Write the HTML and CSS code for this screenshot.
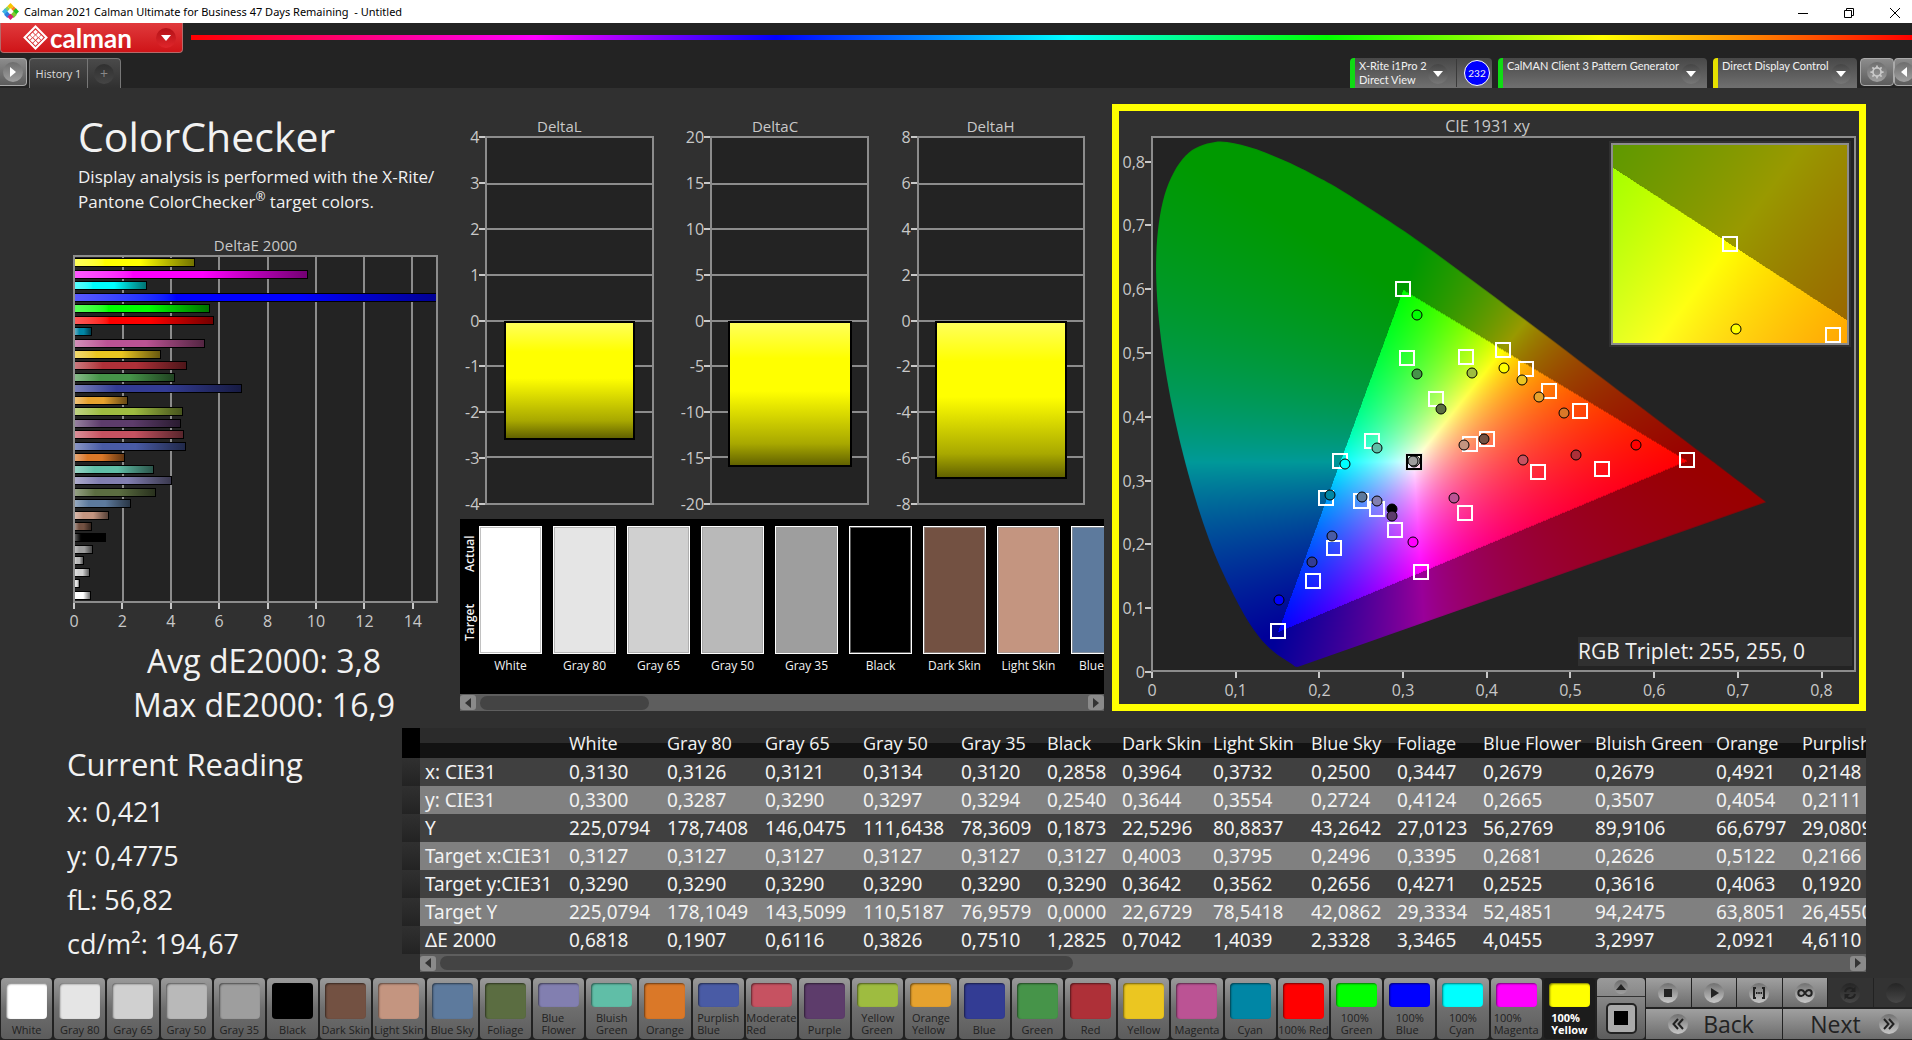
FILE: index.html
```html
<!DOCTYPE html>
<html lang="en">
<head>
  <meta charset="UTF-8">
  <title>Calman 2021</title>
  <link rel="stylesheet" href="styles.css">
</head>
<body>
  <div class="titlebar">
    <svg class="app-icon" viewBox="0 0 16 16">
      <path d="M8 0l3 3-3 3-3-3z" fill="#f7c600"/>
      <path d="M5 3l3 3-3 3-3-3z" fill="#8fd14f"/>
      <path d="M11 3l3 3-3 3-3-3z" fill="#f58220"/>
      <path d="M3 5l3 3-3 3-3-3z" fill="#3cb4e5"/>
      <path d="M13 5l3 3-3 3-3-3z" fill="#1fc21f"/>
      <path d="M8 5l3 3-3 3-3-3z" fill="#fff"/>
      <path d="M5 8l3 3-3 3-3-3z" fill="#2f7de1"/>
      <path d="M11 8l3 3-3 3-3-3z" fill="#7fc832"/>
      <path d="M8 10l3 3-3 3-3-3z" fill="#d6246e"/>
    </svg>
    <span class="window-title">Calman 2021 Calman Ultimate for Business 47 Days Remaining &nbsp;- Untitled</span>
    <button class="win-btn" aria-label="Minimize"><svg viewBox="0 0 12 12"><path d="M1 6.500h10"/></svg></button>
    <button class="win-btn" aria-label="Restore"><svg viewBox="0 0 12 12"><path d="M1.500 3.500h7v7h-7zM3.500 3.500v-2h7v7h-2"/></svg></button>
    <button class="win-btn" aria-label="Close"><svg viewBox="0 0 12 12"><path d="M1 1l10 10M11 1L1 11"/></svg></button>
  </div>

  <header class="header">
    <div class="brand-row">
      <button class="brand">
        <svg class="brand-mark" viewBox="0 0 24 24">
          <path d="M12 1.500L22.500 12 12 22.500 1.500 12z" fill="none" stroke="#fff" stroke-width="2"/>
          <g fill="#fff">
            <path d="M12 4.500l2.300 2.300L12 9.100 9.700 6.800z"/>
            <path d="M9.200 7.300l2.300 2.300-2.300 2.300-2.300-2.300z"/>
            <path d="M14.800 7.300l2.300 2.300-2.300 2.300-2.300-2.300z"/>
            <path d="M6.500 9.900l2.200 2.200-2.200 2.200-2.200-2.200z"/>
            <path d="M12 9.900l2.200 2.200-2.200 2.200-2.200-2.200z"/>
            <path d="M17.500 9.900l2.200 2.200-2.200 2.200-2.200-2.200z"/>
            <path d="M9.200 12.500l2.300 2.300-2.300 2.300-2.300-2.300z"/>
            <path d="M14.800 12.500l2.300 2.300-2.300 2.300-2.300-2.300z"/>
            <path d="M12 15.200l2.300 2.300-2.300 2.300-2.300-2.300z"/>
          </g>
        </svg>
        <span class="brand-name">calman</span>
        <span class="knob knob-red"><i class="tri-down"></i></span>
      </button>
      <div class="rainbow"></div>
    </div>
    <div class="tab-row">
      <button class="side-btn" aria-label="Expand"><span class="knob"><i class="tri-right"></i></span></button>
      <div class="tabs">
        <button class="tab">History 1</button>
        <button class="tab tab-add" aria-label="Add"><span class="knob knob-dark">+</span></button>
      </div>
      <div class="devices">
        <div class="device device-meter">
          <button class="device-main"><span>X-Rite i1Pro 2<br>Direct View</span><span class="knob knob-gray"><i class="tri-down"></i></span></button>
          <span class="counter">232</span>
        </div>
        <button class="device device-source"><span>CalMAN Client 3 Pattern Generator</span><span class="knob knob-gray"><i class="tri-down"></i></span></button>
        <button class="device device-display"><span>Direct Display Control</span><span class="knob knob-gray"><i class="tri-down"></i></span></button>
        <button class="side-btn gear" aria-label="Settings">
          <span class="knob"><svg viewBox="0 0 16 16" class="gear-icon"><circle cx="8" cy="8" r="4.600"/><path d="M8 .5v3M8 12.500v3M.5 8h3M12.500 8h3M2.700 2.700l2.100 2.100M11.200 11.200l2.100 2.100M13.300 2.700l-2.100 2.100M4.800 11.200l-2.100 2.100"/></svg></span>
        </button>
        <button class="side-btn collapse" aria-label="Collapse"><span class="knob"><i class="tri-left"></i></span></button>
      </div>
    </div>
  </header>

  <main class="main">
    <section class="top">
      <div class="overview">
        <h1>ColorChecker</h1>
        <p class="intro">Display analysis is performed with the X-Rite/<br>Pantone ColorChecker<sup>®</sup> target colors.</p>
        <div class="de-chart">
          <div class="chart-title">DeltaE 2000</div>
          <div class="plot de-plot" id="dePlot"></div>
          <div class="x-axis" id="deAxis"></div>
        </div>
        <div class="summary">
          <div>Avg dE2000: 3,8</div>
          <div>Max dE2000: 16,9</div>
        </div>
      </div>

      <div class="middle">
        <div class="delta-charts" id="deltaCharts"></div>
        <div class="strip">
          <div class="strip-body">
            <div class="strip-side"><span>Actual</span><span>Target</span></div>
            <div class="strip-list" id="strip"></div>
          </div>
          <div class="scrollbar">
            <button aria-label="Scroll left"><i class="tri-left"></i></button>
            <div class="track"><div class="thumb thumb-strip"></div></div>
            <button aria-label="Scroll right"><i class="tri-right"></i></button>
          </div>
        </div>
      </div>

      <div class="cie">
        <div class="chart-title cie-title">CIE 1931 xy</div>
        <div class="cie-body">
          <div class="y-ticks" id="cieY"></div>
          <div class="plot cie-plot" id="ciePlot">
            <canvas id="gamut" width="701" height="531"></canvas>
            <div class="inset" id="inset"><canvas id="insetGamut" width="236" height="198"></canvas></div>
            <div class="triplet">RGB Triplet: 255, 255, 0</div>
          </div>
        </div>
        <div class="x-axis cie-x" id="cieX"></div>
      </div>
    </section>

    <section class="bottom">
      <div class="reading">
        <h2>Current Reading</h2>
        <div>x: 0,421</div>
        <div>y: 0,4775</div>
        <div>fL: 56,82</div>
        <div>cd/m²: 194,67</div>
      </div>
      <div class="data">
        <div class="table-wrap">
          <table>
            <colgroup id="cols"></colgroup>
            <thead id="thead"></thead>
            <tbody id="tbody"></tbody>
          </table>
        </div>
        <div class="scrollbar scrollbar-data">
          <button aria-label="Scroll left"><i class="tri-left"></i></button>
          <div class="track"><div class="thumb thumb-data"></div></div>
          <button aria-label="Scroll right"><i class="tri-right"></i></button>
        </div>
      </div>
    </section>
  </main>

  <footer class="footer">
    <div class="patches" id="patches"></div>
    <div class="stepper">
      <button class="step-up" aria-label="Up"><span class="knob"><i class="tri-up"></i></span></button>
      <button class="step-stop" aria-label="Pattern window"><span></span></button>
    </div>
    <div class="controls">
      <div class="transport">
        <button aria-label="Stop"><span class="knob knob-light"><svg viewBox="0 0 16 16"><path d="M4 4h8v8H4z"/></svg></span></button>
        <button aria-label="Play"><span class="knob knob-light"><svg viewBox="0 0 16 16"><path d="M5 3l8 5-8 5z"/></svg></span></button>
        <button aria-label="Read series"><span class="knob knob-light"><svg viewBox="0 0 16 16"><path class="line thick" d="M5 3H3v10h2M11 3h2v10h-2"/><path d="M5 7h1.500v2H5zM7.200 7h1.600v2H7.200zM9.500 7H11v2H9.500z"/></svg></span></button>
        <button aria-label="Continuous"><span class="knob knob-light"><svg viewBox="0 0 16 16"><path class="line thick" d="M8 8C6.500 5.500 5.500 5 4.300 5a3 3 0 000 6C5.500 11 6.500 10.500 8 8s2.500-3 3.700-3a3 3 0 010 6C10.500 11 9.500 10.500 8 8z"/></svg></span></button>
        <button class="off" aria-label="Refresh"><span class="knob knob-off"><svg viewBox="0 0 16 16"><path class="line thick" d="M3 7a5 5 0 018.500-2.500M13 9a5 5 0 01-8.500 2.500"/><path d="M13.500 1.500V7H8zM2.500 14.500V9H8z"/></svg></span></button>
        <button class="off" aria-label="Record"><span class="knob knob-off"></span></button>
      </div>
      <div class="nav">
        <button class="back"><span class="knob knob-light"><svg viewBox="0 0 16 16"><path class="line thick" d="M8 3L3.500 8 8 13M13 3L8.500 8l4.500 5"/></svg></span>Back</button>
        <button class="next">Next<span class="knob knob-light"><svg viewBox="0 0 16 16"><path class="line thick" d="M3 3l4.500 5L3 13M8 3l4.500 5L8 13"/></svg></span></button>
      </div>
    </div>
  </footer>

  <script src="script.js"></script>
</body>
</html>
```

FILE: styles.css
```css
* {
  box-sizing: border-box;
}
body {
  margin: 0;
  min-height: 100vh;
  display: flex;
  flex-direction: column;
  overflow-x: hidden;
  background: #303030;
  color: #f2f2f2;
  font-family: "Open Sans", "Noto Sans", sans-serif;
}
button {
  margin: 0;
  padding: 0;
  border: none;
  font-family: inherit;
  color: inherit;
  cursor: pointer;
}
h1, h2, p {
  margin: 0;
  font-weight: normal;
}

/* window title */
.titlebar {
  display: flex;
  align-items: center;
  height: 23px;
  padding-right: 0;
  margin-right: -6px;
  background: #fff;
  color: #000;
}
.app-icon {
  width: 17px;
  height: 17px;
  margin: 0 5px 0 2px;
}
.window-title {
  flex: 1;
  font-family: "Noto Sans", sans-serif;
  font-size: 11px;
}
.win-btn {
  width: 46px;
  height: 23px;
  background: none;
}
.win-btn svg {
  width: 12px;
  height: 12px;
  fill: none;
  stroke: #000;
  vertical-align: middle;
}

/* small round knobs and triangles */
.knob {
  display: flex;
  flex: none;
  align-items: center;
  justify-content: center;
  width: 20px;
  height: 20px;
  border-radius: 50%;
  background: linear-gradient(#6d6d6d, #a0a0a0);
}
.knob-red { background: linear-gradient(#b31217, #e0252a); }
.knob-dark { background: linear-gradient(#303030, #454545); }
.knob-gray { background: linear-gradient(#454545, #777); }
.knob-light { background: linear-gradient(#707070, #c8c8c8); }
.knob-off { background: linear-gradient(#252525, #474747); }
.tri-down, .tri-up, .tri-left, .tri-right {
  width: 0;
  height: 0;
  border: 5px solid transparent;
}
.tri-down { border-top: 6px solid #fff; border-bottom: 0; }
.tri-up { border-bottom: 6px solid #222; border-top: 0; }
.tri-right { border-left: 6px solid #fff; border-right: 0; }
.tri-left { border-right: 6px solid #fff; border-left: 0; }

/* header */
.header {
  height: 65px;
  background: #232323;
}
.brand-row {
  display: flex;
  gap: 8px;
  height: 35px;
}
.brand {
  display: flex;
  align-items: center;
  width: 183px;
  height: 30px;
  padding: 0 6px 0 22px;
  background: linear-gradient(#e03a3c, #cf1418);
  border: 1px solid #b56a6a;
  border-top: none;
  border-radius: 0 0 4px 4px;
}
.brand-mark {
  width: 25px;
  height: 25px;
}
.brand-name {
  flex: 1;
  padding-left: 2px;
  text-align: left;
  font-family: Lato, sans-serif;
  font-size: 26px;
  font-weight: bold;
  line-height: 24px;
  color: #fff;
}
.rainbow {
  flex: 1;
  height: 5px;
  margin-top: 12px;
  background: linear-gradient(90deg, #f00 0%, #f0f 20%, #00f 34%, #0ff 51%, #0f0 66%, #ff0 82%, #f00 100%);
}
.tab-row {
  display: flex;
  height: 30px;
}
.side-btn {
  display: flex;
  flex: none;
  align-items: center;
  justify-content: center;
  width: 27px;
  height: 28px;
  background: linear-gradient(#8c8c8c, #5c5c5c);
  border: 1px solid #aaa;
  border-left: none;
  border-radius: 0 4px 4px 0;
}
.tabs {
  display: flex;
  margin-left: 2px;
  border: 1px solid #777;
  border-bottom: none;
  border-radius: 4px 4px 0 0;
  background: linear-gradient(#4a4a4a, #303030);
}
.tab {
  width: 57px;
  background: none;
  font-size: 11px;
  color: #ddd;
}
.tab-add {
  display: flex;
  align-items: center;
  justify-content: center;
  width: 33px;
  border-left: 1px solid #777;
}
.tab-add .knob {
  color: #888;
  font-size: 14px;
}
.devices {
  display: flex;
  gap: 6px;
  margin-left: auto;
}
.device {
  display: flex;
  height: 30px;
  padding: 1px 6px 0 4px;
  border-left: 5px solid #0fdc14;
  border-radius: 4px 4px 0 0;
  background: linear-gradient(#484848, #707070);
  font-family: Lato, sans-serif;
  font-size: 11px;
  line-height: 14px;
  text-align: left;
  white-space: nowrap;
  color: #f2f2f2;
}
.device .knob {
  margin: 5px 0 0 auto;
}
.device-meter {
  width: 142px;
  padding: 0 2px 0 4px;
  align-items: center;
}
.device-main {
  display: flex;
  flex: 1;
  height: 28px;
  padding-right: 8px;
  border-right: 1px solid #3a3a3a;
  background: none;
  font-size: 11px;
  line-height: 14px;
  text-align: left;
}
.counter {
  width: 26px;
  height: 26px;
  margin-left: 7px;
  border: 1px solid #fff;
  border-radius: 50%;
  background: #00f;
  font-size: 10px;
  line-height: 24px;
  text-align: center;
}
.device-source { width: 209px; }
.device-display { width: 144px; border-left-color: #e6e000; }
.gear {
  width: 34px;
  border-left: 1px solid #aaa;
  border-radius: 4px;
  margin-left: -3px;
}
.gear-icon {
  width: 14px;
  height: 14px;
  fill: none;
  stroke: #c9c9c9;
  stroke-width: 2;
}
.collapse {
  width: 18px;
  margin-left: -6px;
  border-left: 1px solid #aaa;
  border-right: none;
  border-radius: 4px 0 0 4px;
}

/* main area */
.main {
  flex: 1;
  display: flex;
  flex-direction: column;
  gap: 17px;
  padding: 16px 46px 6px 0;
}
.top {
  flex: 1;
  display: grid;
  grid-template-columns: 460fr 644fr 762fr;
}
.overview, .middle, .cie {
  display: flex;
  flex-direction: column;
  min-width: 0;
}
.overview h1 {
  margin-top: 8px;
  padding-left: 78px;
  font-size: 41px;
  line-height: 48px;
}
.intro {
  margin-top: 4px;
  padding-left: 78px;
  font-size: 17px;
  line-height: 25px;
  white-space: nowrap;
}
.intro sup {
  font-size: 12px;
  line-height: 0;
}
.chart-title {
  font-size: 15px;
  line-height: 20px;
  text-align: center;
  color: #c8c8c8;
}
.cie-title { font-size: 16px; }
.plot {
  position: relative;
  border: 2px solid #8c8c8c;
  background: #232323;
}
.de-chart {
  flex: 1;
  display: flex;
  flex-direction: column;
  margin-top: 21px;
  padding: 0 22px 0 73px;
}
.de-plot {
  flex: 1;
  display: flex;
  flex-direction: column;
  overflow: hidden;
}
.grid-x, .grid-y {
  position: absolute;
  background: #8c8c8c;
}
.grid-x { top: 0; bottom: 0; width: 2px; margin-left: -1px; }
.grid-y { left: 0; right: 0; height: 2px; margin-top: -1px; }
.bar-row {
  position: relative;
  flex: 1;
  display: flex;
  align-items: center;
}
.bar {
  height: 9px;
  flex: none;
  border: 1px solid #000;
  border-left: none;
}
.x-axis {
  position: relative;
  height: 36px;
  margin: 0 1px;
  font-size: 16px;
  color: #c8c8c8;
}
.x-tick {
  position: absolute;
  top: 0;
  display: flex;
  flex-direction: column;
  align-items: center;
  width: 40px;
  margin-left: -20px;
  line-height: 24px;
}
.x-tick::before {
  content: "";
  width: 2px;
  height: 6px;
  background: #c8c8c8;
}
.summary {
  margin-bottom: -16px;
  padding: 0 5px 0 73px;
  font-size: 32px;
  line-height: 44px;
  text-align: center;
}

/* delta L C H */
.delta-charts {
  flex: 1;
  display: grid;
  grid-template-columns: repeat(3, 1fr);
  gap: 27px;
  margin-top: 12px;
  padding: 0 19px 0 5px;
}
.delta {
  display: flex;
  flex-direction: column;
}
.delta-body {
  flex: 1;
  display: flex;
}
.y-ticks {
  display: flex;
  flex-direction: column;
  justify-content: space-between;
  padding: 1px 0;
  font-size: 16px;
  color: #c8c8c8;
}
.y-tick {
  display: flex;
  align-items: center;
  justify-content: flex-end;
  height: 0;
}
.y-tick::after {
  content: "";
  width: 6px;
  height: 2px;
  background: #c8c8c8;
}
.delta .plot { flex: 1; }
.delta-bar {
  position: absolute;
  left: 10%;
  right: 10%;
  top: 50%;
  border: 2px solid #000;
  background: linear-gradient(#ffff5a, #ff0 25%, #ff0 48%, #a8a800 85%, #626200);
}

/* actual / target strip */
.strip {
  margin-top: 14px;
  background: #000;
}
.strip-body {
  display: flex;
  height: 175px;
  overflow: hidden;
}
.strip-side {
  display: flex;
  flex: none;
  flex-direction: row-reverse;
  justify-content: space-around;
  align-items: center;
  width: 19px;
  height: 138px;
  writing-mode: vertical-rl;
  transform: rotate(180deg);
  font-size: 12px;
  font-weight: 600;
  line-height: 16px;
}
.strip-list {
  display: flex;
  gap: 11px;
  padding-top: 7px;
}
.strip-item {
  flex: none;
  width: 63px;
  font-size: 12px;
  line-height: 24px;
  text-align: center;
  white-space: nowrap;
}
.strip-color {
  height: 128px;
  border: 1px solid #fff;
  box-shadow: inset 0 0 0 1px #9999;
}
.scrollbar {
  display: flex;
  align-items: center;
  height: 17px;
  background: #5e5e5e;
}
.scrollbar-data {
  height: 18px;
  margin-left: 18px;
}
.scrollbar button {
  display: flex;
  align-items: center;
  justify-content: center;
  width: 16px;
  height: 15px;
  border-radius: 3px;
  background: #8a8a8a;
}
.scrollbar .tri-left { border-right-color: #333; }
.scrollbar .tri-right { border-left-color: #333; }
.track {
  flex: 1;
  padding: 0 4px;
}
.thumb {
  height: 14px;
  border-radius: 7px;
  background: #444;
}
.thumb-strip { width: 28%; }
.thumb-data { width: 45%; }

/* CIE diagram */
.cie {
  margin-left: 8px;
  border: 7px solid #ff0;
  padding: 5px 3px 3px 0;
}
.cie-body {
  flex: 1;
  display: flex;
}
.cie-body .y-ticks {
  position: relative;
  width: 32px;
}
.cie-body .y-tick {
  position: absolute;
  right: 0;
}
.cie .x-axis {
  height: 29px;
  margin-left: 33px;
}
.cie-plot {
  flex: 1;
}
.cie-plot canvas {
  display: block;
  position: absolute;
  width: 100%;
  height: 100%;
}
.square, .dot {
  position: absolute;
  transform: translate(-50%, 50%);
}
.square {
  width: 16px;
  height: 16px;
  border: 2px solid #fff;
}
.square-white { border-color: #000; outline: 1px solid #ddd8; }
.dot {
  width: 11px;
  height: 11px;
  border: 1px solid #000;
  border-radius: 50%;
}
.inset {
  position: absolute;
  top: 1%;
  right: 5px;
  width: 34%;
  height: 38%;
  border: 2px solid #8c8c8c;
  outline: 2px solid #303030;
  overflow: hidden;
}
.triplet {
  position: absolute;
  right: 2px;
  bottom: 4px;
  width: 274px;
  background: #303030;
  font-size: 21px;
  line-height: 29px;
}

/* reading and table */
.bottom {
  display: grid;
  grid-template-columns: 402fr 1464fr;
}
.reading {
  padding-left: 67px;
  font-size: 27px;
  line-height: 44px;
}
.reading h2 {
  margin: 14px 0 4px;
  font-size: 31px;
}
.data {
  min-width: 0;
}
.table-wrap {
  overflow: hidden;
}
table {
  width: max-content;
  border-collapse: collapse;
  table-layout: fixed;
  font-family: "Noto Sans", sans-serif;
  font-size: 19px;
}
th, td {
  height: 28px;
  padding: 0 0 0 5px;
  font-weight: normal;
  line-height: 20px;
  text-align: left;
  white-space: nowrap;
}
thead tr {
  background: linear-gradient(#2b2b2b 50%, #121212 50%);
}
thead th {
  height: 30px;
  font-family: "Open Sans", sans-serif;
  font-size: 18px;
}
thead th:first-child { background: #000; }
tbody tr { background: #404040; }
tbody tr:nth-child(even) { background: #808080; }
tbody td:first-child {
  background: linear-gradient(#303030, #232323);
}

/* bottom bar */
.footer {
  display: flex;
  height: 62px;
  background: #222;
}
.patches {
  flex: 1;
  display: grid;
  grid-template-columns: repeat(30, 1fr);
  gap: 2px;
  padding: 0 2px 0 1px;
}
.patch {
  display: flex;
  flex-direction: column;
  align-items: center;
  min-width: 0;
  height: 61px;
  padding: 5px 0 3px;
  border-radius: 4px;
  background: linear-gradient(#9a9a9a, #6e6e6e 50%, #5c5c5c);
  color: #222;
  font-size: 11px;
  line-height: 12px;
  text-align: left;
  white-space: nowrap;
}
.patch-color {
  flex: 1;
  width: 41px;
  margin-bottom: 5px;
  border-radius: 4px;
  box-shadow: inset 1px 1px 2px #0008;
}
.patch-active {
  background: #1c1c1c;
  color: #fff;
  font-weight: bold;
}
.stepper {
  width: 48px;
  height: 61px;
  border-radius: 4px;
  background: linear-gradient(#9a9a9a, #5c5c5c);
}
.stepper button {
  display: flex;
  align-items: center;
  justify-content: center;
  width: 100%;
  background: none;
}
.step-up {
  height: 19px;
  border-bottom: 1px solid #333;
}
.step-up .knob {
  width: 14px;
  height: 14px;
}
.stepper .step-stop { height: 42px; }
.step-stop span {
  width: 31px;
  height: 31px;
  border: 2px solid #222;
  border-radius: 5px;
  background: linear-gradient(#000, #000) center / 14px 14px no-repeat #aaa;
}
.controls {
  width: 272px;
  margin: 0 -6px 0 1px;
}
.transport, .nav {
  display: flex;
  gap: 1px;
}
.transport {
  margin-bottom: 2px;
}
.controls button {
  display: flex;
  align-items: center;
  justify-content: center;
  height: 29px;
  background: linear-gradient(#a0a0a0, #6c6c6c);
  color: #222;
}
.transport button { flex: 1; }
.controls .off { background: #333; }
.controls svg {
  width: 16px;
  height: 16px;
  fill: #222;
}
.controls .line {
  fill: none;
  stroke: #222;
}
.controls .thick { stroke-width: 2; }
.nav button {
  height: 30px;
  font-size: 23px;
}
.nav .back { width: 136px; gap: 15px; padding-right: 6px; }
.nav .next { flex: 1; gap: 18px; padding-left: 8px; }
```

FILE: script.js
```js
// name, colour, dE2000, button label
const patches = [
  ['White', '#ffffff', 0.6818],
  ['Gray 80', '#e5e5e5', 0.1907],
  ['Gray 65', '#d0d0d0', 0.6116],
  ['Gray 50', '#b9b9b9', 0.3826],
  ['Gray 35', '#9e9e9e', 0.7510],
  ['Black', '#000000', 1.2825],
  ['Dark Skin', '#735142', 0.7042],
  ['Light Skin', '#c49580', 1.4039],
  ['Blue Sky', '#5d7a9d', 2.3328],
  ['Foliage', '#5b6d41', 3.3465],
  ['Blue Flower', '#827fb0', 4.0455, 'Blue<br>Flower'],
  ['Bluish Green', '#60bea7', 3.2997, 'Bluish<br>Green'],
  ['Orange', '#da7828', 2.0921],
  ['Purplish Blue', '#495ba5', 4.6110, 'Purplish<br>Blue'],
  ['Moderate Red', '#c65261', 4.54, 'Moderate<br>Red'],
  ['Purple', '#5d3c6b', 4.42],
  ['Yellow Green', '#9ebc40', 4.5, 'Yellow<br>Green'],
  ['Orange Yellow', '#e6a22e', 2.19, 'Orange<br>Yellow'],
  ['Blue', '#333c94', 6.92],
  ['Green', '#469449', 4.17],
  ['Red', '#ae3038', 4.66],
  ['Yellow', '#ebc621', 3.58],
  ['Magenta', '#bb5394', 5.4],
  ['Cyan', '#0086a5', 0.7],
  ['100% Red', '#ff0000', 5.77],
  ['100% Green', '#00ff00', 5.6, '100%<br>Green'],
  ['100% Blue', '#0000ff', 16.9, '100%<br>Blue'],
  ['100% Cyan', '#00ffff', 3.0, '100%<br>Cyan'],
  ['100% Magenta', '#ff00ff', 9.68, '100%<br>Magenta'],
  ['100% Yellow', '#ffff00', 4.98, '100%<br>Yellow']
];

const byId = id => document.getElementById(id);

// bottom buttons
byId('patches').innerHTML = patches.map((p, i) =>
  `<button class="patch ${i === 29 ? 'patch-active' : ''}"><span class="patch-color" style="background-color:${p[1]}"></span><span>${p[3] || p[0]}</span></button>`
).join('');

// actual / target strip
byId('strip').innerHTML = patches.slice(0, 10).map(p =>
  `<div class="strip-item"><div class="strip-color" style="background-color:${p[1]}"></div>${p[0]}</div>`
).join('');

// DeltaE 2000 bars, 0..15
let de = '';
for (let v = 2; v < 15; v += 2) de += `<div class="grid-x" style="left:${v / 15 * 100}%"></div>`;
de += patches.slice().reverse().map(p =>
  `<div class="bar-row"><div class="bar" style="width:${p[2] / 15 * 100}%;background:linear-gradient(90deg, color-mix(in srgb, ${p[1]} 65%, white), ${p[1]} 25%, ${p[1]} 55%, color-mix(in srgb, ${p[1]} 45%, black))"></div></div>`
).join('');
byId('dePlot').innerHTML = de;
let deTicks = '';
for (let v = 0; v < 15; v += 2) deTicks += `<span class="x-tick" style="left:${v / 15 * 100}%">${v}</span>`;
byId('deAxis').innerHTML = deTicks;

// DeltaL, DeltaC, DeltaH
byId('deltaCharts').innerHTML = [['DeltaL', 4, 2.63], ['DeltaC', 20, 16.05], ['DeltaH', 8, 6.93]].map(([name, max, val]) => {
  let ticks = '', lines = '';
  for (let i = 0; i <= 8; i++) {
    ticks += `<span class="y-tick">${max - i * max / 4}</span>`;
    if (i > 0 && i < 8) lines += `<div class="grid-y" style="top:${i * 12.5}%"></div>`;
  }
  return `<div class="delta"><div class="chart-title">${name}</div><div class="delta-body"><div class="y-ticks">${ticks}</div>
    <div class="plot">${lines}<div class="delta-bar" style="height:${val / max * 50}%"></div></div></div></div>`;
}).join('');

// table
const table = [
  ['', 'White', 'Gray 80', 'Gray 65', 'Gray 50', 'Gray 35', 'Black', 'Dark Skin', 'Light Skin', 'Blue Sky', 'Foliage', 'Blue Flower', 'Bluish Green', 'Orange', 'Purplish Blue'],
  ['x: CIE31', '0,3130', '0,3126', '0,3121', '0,3134', '0,3120', '0,2858', '0,3964', '0,3732', '0,2500', '0,3447', '0,2679', '0,2679', '0,4921', '0,2148'],
  ['y: CIE31', '0,3300', '0,3287', '0,3290', '0,3297', '0,3294', '0,2540', '0,3644', '0,3554', '0,2724', '0,4124', '0,2665', '0,3507', '0,4054', '0,2111'],
  ['Y', '225,0794', '178,7408', '146,0475', '111,6438', '78,3609', '0,1873', '22,5296', '80,8837', '43,2642', '27,0123', '56,2769', '89,9106', '66,6797', '29,0809'],
  ['Target x:CIE31', '0,3127', '0,3127', '0,3127', '0,3127', '0,3127', '0,3127', '0,4003', '0,3795', '0,2496', '0,3395', '0,2681', '0,2626', '0,5122', '0,2166'],
  ['Target y:CIE31', '0,3290', '0,3290', '0,3290', '0,3290', '0,3290', '0,3290', '0,3642', '0,3562', '0,2656', '0,4271', '0,2525', '0,3616', '0,4063', '0,1920'],
  ['Target Y', '225,0794', '178,1049', '143,5099', '110,5187', '76,9579', '0,0000', '22,6729', '78,5418', '42,0862', '29,3334', '52,4851', '94,2475', '63,8051', '26,4550'],
  ['ΔE 2000', '0,6818', '0,1907', '0,6116', '0,3826', '0,7510', '1,2825', '0,7042', '1,4039', '2,3328', '3,3465', '4,0455', '3,2997', '2,0921', '4,6110']
];
const widths = [18, 144, 98, 98, 98, 98, 86, 75, 91, 98, 86, 86, 112, 121, 86, 130];
byId('cols').innerHTML = widths.map(w => `<col style="width:${w}px">`).join('');
const row = (cells, tag) => `<tr><${tag}></${tag}>` + cells.map(c => `<${tag}>${c}</${tag}>`).join('') + '</tr>';
byId('thead').innerHTML = row(table[0], 'th');
byId('tbody').innerHTML = table.slice(1).map(r => row(r, 'td')).join('');

// CIE axes, both 0..0.84
const MAX = 0.84;
let xt = '', yt = '';
for (let i = 0; i <= 8; i++) {
  const label = i ? '0,' + i : '0';
  xt += `<span class="x-tick" style="left:${i / 10 / MAX * 100}%">${label}</span>`;
  yt += `<span class="y-tick" style="bottom:${i / 10 / MAX * 100}%">${label}</span>`;
}
byId('cieX').innerHTML = xt;
byId('cieY').innerHTML = yt;

const locus = [
  [.1741, .005], [.1714, .0051], [.1689, .0069], [.1644, .0109], [.1566, .0177], [.151, .0227], [.144, .0297],
  [.1355, .0399], [.1241, .0578], [.1096, .0868], [.0913, .1327], [.0687, .2007], [.0454, .295], [.0235, .4127],
  [.0082, .5384], [.0039, .6548], [.0139, .7502], [.0389, .812], [.0743, .8338], [.1142, .8262], [.1547, .8059],
  [.1929, .7816], [.2296, .7543], [.3016, .6923], [.3731, .6245], [.4441, .5547], [.5125, .4866], [.5752, .4242],
  [.627, .3725], [.6658, .334], [.6915, .3083], [.719, .2809], [.7347, .2653]
];

// xy to displayable rgb; colours outside Rec.709 are dimmed
function xyToRgb(x, y) {
  const X = x / y, Z = (1 - x - y) / y;
  const lin = [
    3.2406 * X - 1.5372 - 0.4986 * Z,
    -0.9689 * X + 1.8758 + 0.0415 * Z,
    0.0557 * X - 0.2040 + 1.0570 * Z
  ];
  const dim = Math.min(...lin) < -0.0001 ? 0.6 : 1;
  const top = Math.max(...lin);
  return lin.map(v => 255 * dim * Math.max(v, 0) / top);
}

function paint(canvas, x0, x1, y0, y1) {
  const ctx = canvas.getContext('2d');
  const w = canvas.width, h = canvas.height;
  const img = ctx.createImageData(w, h);
  for (let j = 0; j < h; j++) {
    for (let i = 0; i < w; i++) {
      const x = x0 + (i + 0.5) / w * (x1 - x0);
      const y = y1 - (j + 0.5) / h * (y1 - y0);
      const c = xyToRgb(x, y);
      const k = (j * w + i) * 4;
      img.data[k] = c[0];
      img.data[k + 1] = c[1];
      img.data[k + 2] = c[2];
      img.data[k + 3] = 255;
    }
  }
  ctx.putImageData(img, 0, 0);
  // keep only what lies inside the locus, drawn as a smooth curve through its points
  const pts = locus.map(p => [(p[0] - x0) / (x1 - x0) * w, (y1 - p[1]) / (y1 - y0) * h]);
  ctx.globalCompositeOperation = 'destination-in';
  ctx.beginPath();
  ctx.moveTo(...pts[0]);
  for (let i = 0; i < pts.length - 1; i++) {
    const p0 = pts[i - 1] || pts[i], p1 = pts[i], p2 = pts[i + 1], p3 = pts[i + 2] || p2;
    ctx.bezierCurveTo(
      p1[0] + (p2[0] - p0[0]) / 6, p1[1] + (p2[1] - p0[1]) / 6,
      p2[0] - (p3[0] - p1[0]) / 6, p2[1] - (p3[1] - p1[1]) / 6,
      p2[0], p2[1]
    );
  }
  ctx.closePath();
  ctx.fill();
}

// target squares
const targets = [
  [.3, .602], [.3045, .492], [.375, .4945], [.4193, .5053], [.3395, .4285], [.2626, .3616], [.2246, .3295],
  [.2078, .271], [.2496, .2665], [.2681, .2535], [.2905, .2214], [.3735, .2476], [.3209, .1542], [.2166, .192],
  [.1915, .14], [.15, .061], [.3795, .357], [.4003, .365], [.447, .4755], [.4743, .4405], [.5122, .4085],
  [.64, .3315], [.538, .3175], [.4615, .3125]
];
// measured dots: x, y, patch index
const dots = [
  [.3167, .5598, 25], [.3167, .467, 19], [.3825, .469, 16], [.421, .4775, 29], [.3447, .4124, 9], [.2679, .3507, 11],
  [.2305, .3247, 27], [.2125, .2762, 23], [.25, .2724, 8], [.2679, .2665, 10], [.2858, .254, 5], [.2858, .2426, 15],
  [.361, .2712, 22], [.3115, .2015, 28], [.2148, .2111, 13], [.19, .1704, 18], [.151, .11, 26], [.3732, .3554, 7],
  [.3964, .3644, 6], [.313, .33, 0], [.3126, .3287, 1], [.3134, .3297, 3], [.312, .3294, 4], [.4425, .4572, 21],
  [.463, .4317, 17], [.4921, .4054, 12], [.507, .339, 20], [.4435, .3321, 14], [.5785, .3552, 24]
];

function marks(x0, x1, y0, y1) {
  const pos = p => `left:${(p[0] - x0) / (x1 - x0) * 100}%;bottom:${(p[1] - y0) / (y1 - y0) * 100}%`;
  const inside = p => p[0] > x0 && p[0] < x1 && p[1] > y0 - 0.002 && p[1] < y1;
  return targets.filter(inside).map(p => `<i class="square" style="${pos(p)}"></i>`).join('') +
    [[.3127, .329]].filter(inside).map(p => `<i class="square square-white" style="${pos(p)}"></i>`).join('') +
    dots.filter(inside).map(p => `<i class="dot" style="${pos(p)};background:${patches[p[2]][1]}"></i>`).join('');
}

paint(byId('gamut'), 0, MAX, 0, MAX);
byId('gamut').insertAdjacentHTML('afterend', marks(0, MAX, 0, MAX));

// zoomed view round the selected target
const zoom = [.4193 - .0315, .4193 + .0315, .5053 - .0325, .5053 + .0325];
paint(byId('insetGamut'), ...zoom);
byId('insetGamut').insertAdjacentHTML('afterend', marks(...zoom));
```
